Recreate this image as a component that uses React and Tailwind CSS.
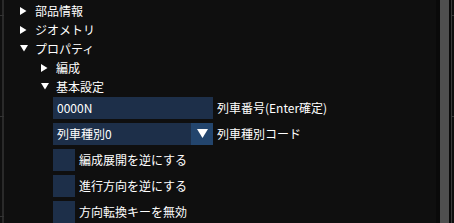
import React from "react";

const font = { fontFamily: '"Noto Sans CJK JP", "Noto Sans", sans-serif' };

function Arrow({ open }) {
  return open ? (
    <svg width="8" height="7" viewBox="0 0 8 7" className="shrink-0">
      <polygon points="0,0 8,0 4,6.5" fill="#ffffff" />
    </svg>
  ) : (
    <svg width="7" height="8" viewBox="0 0 7 8" className="shrink-0">
      <polygon points="0,0 6.5,4 0,8" fill="#ffffff" />
    </svg>
  );
}

function TreeNode({ label, open, indent }) {
  return (
    <div className={`flex items-center h-5 ${indent ? "pl-[36px]" : "pl-[15px]"}`}>
      <div className="w-[15px] flex">
        <Arrow open={open} />
      </div>
      <span className="text-[12px] text-white leading-none">{label}</span>
    </div>
  );
}

function Checkbox({ label }) {
  return (
    <div className="flex items-center h-[22px]">
      <div className="w-[22px] h-[22px] bg-[#1d2f49]" />
      <span className="ml-[4px] text-[12px] text-white leading-none">{label}</span>
    </div>
  );
}

export default function App() {
  return (
    <div className="w-[454px] h-[223px] bg-[#0f0f0f] flex overflow-hidden" style={font}>
      {/* left panel edge */}
      <div className="w-[5px] relative shrink-0">
        <div className="absolute left-[2px] top-0 bottom-0 w-[2px] bg-[#2a2a2a]" />
        <div className="absolute left-0 top-[15px] w-[4px] h-[1px] bg-[#333]" />
        <div className="absolute left-0 top-[116px] w-[4px] h-[1px] bg-[#333]" />
        <div className="absolute left-0 top-[216px] w-[4px] h-[1px] bg-[#333]" />
      </div>

      <div className="flex-1 flex flex-col pt-[2px]">
        <TreeNode label="部品情報" />
        <TreeNode label="ジオメトリ" />
        <TreeNode label="プロパティ" open />
        <TreeNode label="編成" indent />
        <TreeNode label="基本設定" indent open />

        <div className="flex flex-col gap-[4px] mt-[1px] pl-[48px]">
          <div className="flex items-center h-[22px]">
            <div className="w-[160px] h-[22px] bg-[#1d2f49] flex items-center pl-[4px]">
              <span className="text-[12px] text-white leading-none">0000N</span>
            </div>
            <span className="ml-[4px] text-[12px] text-white leading-none">列車番号(Enter確定)</span>
          </div>
          <div className="flex items-center h-[22px]">
            <div className="w-[160px] h-[22px] bg-[#1d2f49] flex items-center">
              <span className="flex-1 pl-[4px] text-[12px] text-white leading-none">列車種別0</span>
              <div className="w-[22px] h-[22px] bg-[#23456d] flex items-center justify-center">
                <svg width="11" height="9" viewBox="0 0 11 9">
                  <polygon points="0,0 11,0 5.5,9" fill="#ffffff" />
                </svg>
              </div>
            </div>
            <span className="ml-[4px] text-[12px] text-white leading-none">列車種別コード</span>
          </div>
          <Checkbox label="編成展開を逆にする" />
          <Checkbox label="進行方向を逆にする" />
          <Checkbox label="方向転換キーを無効" />
        </div>
      </div>

      {/* scrollbar */}
      <div className="w-[4px] bg-[#0a0a0a] shrink-0" />
      <div className="w-[9px] bg-[#4f4f4f] shrink-0" />
      <div className="w-[2px] bg-[#0a0a0a] shrink-0" />
      <div className="w-[1px] bg-[#3a3a3a] shrink-0 relative">
        <div className="absolute left-0 top-[15px] w-[3px] h-[1px] bg-[#3a3a3a]" />
        <div className="absolute left-0 top-[116px] w-[3px] h-[1px] bg-[#3a3a3a]" />
      </div>
      <div className="w-[2px] bg-[#0f0f0f] shrink-0" />
    </div>
  );
}
